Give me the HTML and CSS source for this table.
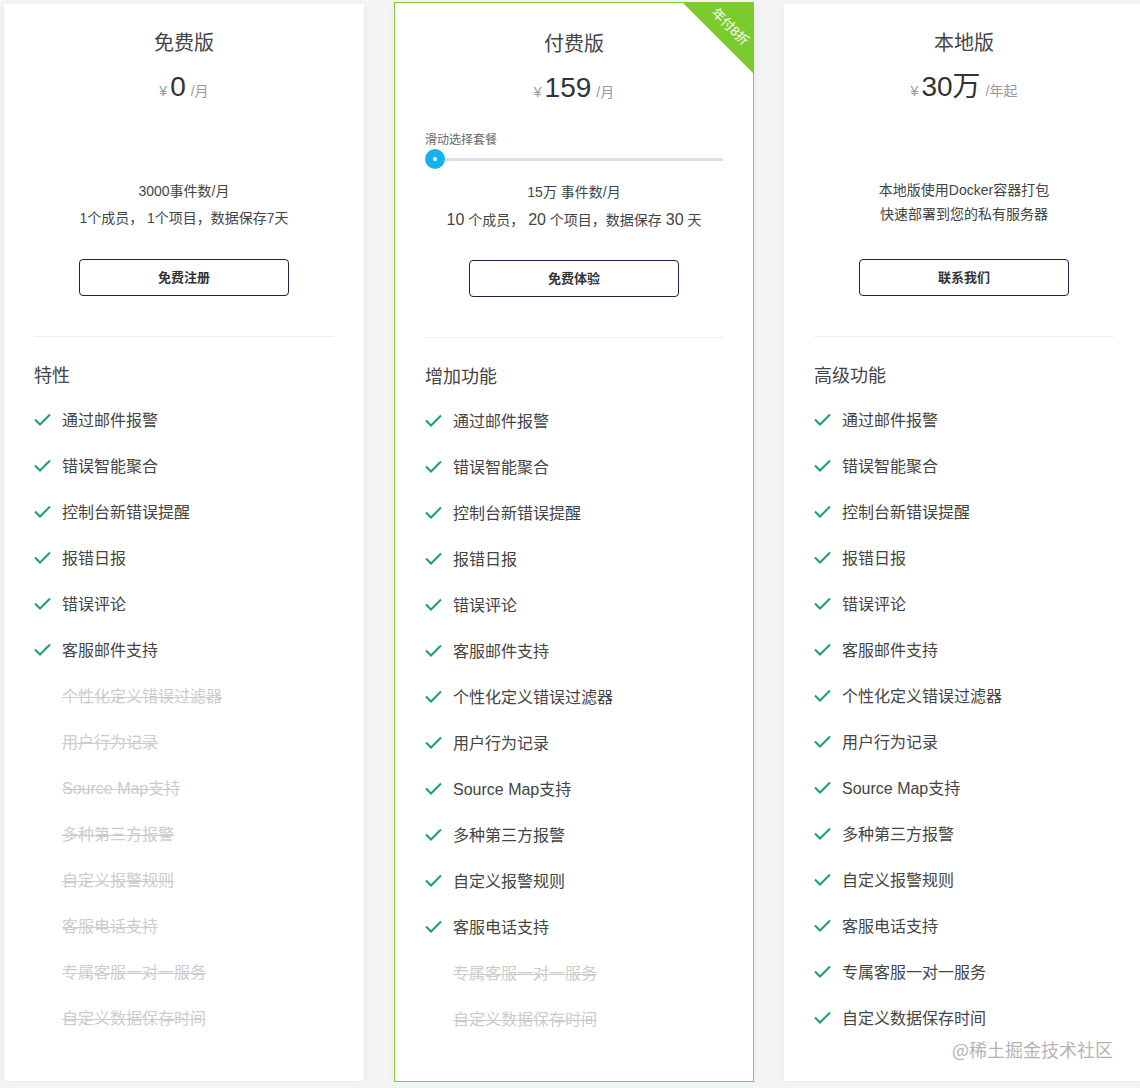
FILE: index.html
```html
<!doctype html>
<html>
<head>
<meta charset="utf-8">
<title>价格方案</title>
<link rel="stylesheet" href="styles.css">
</head>
<body>
<div class="wrap">
    <div class="card">
        <h2 class="title">免费版</h2>
        <p class="price"><span class="yen">¥</span><em>0</em><span class="unit">/月</span></p>
        <div class="spacer"></div>
        <div class="desc">
            <p>3000事件数/月</p>
            <p>1个成员， 1个项目，数据保存7天</p>
        </div>
        <a class="btn" href="#">免费注册</a>
        <div class="line"></div>
        <h3 class="sub">特性</h3>
        <ul class="feats">
            <li><svg viewBox="0 0 17 13"><polyline points="1,6.5 6,11.5 16,1.5"/></svg>通过邮件报警</li>
            <li><svg viewBox="0 0 17 13"><polyline points="1,6.5 6,11.5 16,1.5"/></svg>错误智能聚合</li>
            <li><svg viewBox="0 0 17 13"><polyline points="1,6.5 6,11.5 16,1.5"/></svg>控制台新错误提醒</li>
            <li><svg viewBox="0 0 17 13"><polyline points="1,6.5 6,11.5 16,1.5"/></svg>报错日报</li>
            <li><svg viewBox="0 0 17 13"><polyline points="1,6.5 6,11.5 16,1.5"/></svg>错误评论</li>
            <li><svg viewBox="0 0 17 13"><polyline points="1,6.5 6,11.5 16,1.5"/></svg>客服邮件支持</li>
            <li class="off">个性化定义错误过滤器</li>
            <li class="off">用户行为记录</li>
            <li class="off">Source Map支持</li>
            <li class="off">多种第三方报警</li>
            <li class="off">自定义报警规则</li>
            <li class="off">客服电话支持</li>
            <li class="off">专属客服一对一服务</li>
            <li class="off">自定义数据保存时间</li>
        </ul>
    </div>

    <div class="card hot">
        <div class="ribbon"><span>年付8折</span></div>
        <h2 class="title">付费版</h2>
        <p class="price"><span class="yen">¥</span><em>159</em><span class="unit">/月</span></p>
        <div class="slider">
            <p class="label">滑动选择套餐</p>
            <div class="track"><span class="knob"></span></div>
        </div>
        <div class="desc">
            <p>15万 事件数/月</p>
            <p><b>10</b> 个成员， <b>20</b> 个项目，数据保存 <b>30</b> 天</p>
        </div>
        <a class="btn" href="#">免费体验</a>
        <div class="line"></div>
        <h3 class="sub">增加功能</h3>
        <ul class="feats">
            <li><svg viewBox="0 0 17 13"><polyline points="1,6.5 6,11.5 16,1.5"/></svg>通过邮件报警</li>
            <li><svg viewBox="0 0 17 13"><polyline points="1,6.5 6,11.5 16,1.5"/></svg>错误智能聚合</li>
            <li><svg viewBox="0 0 17 13"><polyline points="1,6.5 6,11.5 16,1.5"/></svg>控制台新错误提醒</li>
            <li><svg viewBox="0 0 17 13"><polyline points="1,6.5 6,11.5 16,1.5"/></svg>报错日报</li>
            <li><svg viewBox="0 0 17 13"><polyline points="1,6.5 6,11.5 16,1.5"/></svg>错误评论</li>
            <li><svg viewBox="0 0 17 13"><polyline points="1,6.5 6,11.5 16,1.5"/></svg>客服邮件支持</li>
            <li><svg viewBox="0 0 17 13"><polyline points="1,6.5 6,11.5 16,1.5"/></svg>个性化定义错误过滤器</li>
            <li><svg viewBox="0 0 17 13"><polyline points="1,6.5 6,11.5 16,1.5"/></svg>用户行为记录</li>
            <li><svg viewBox="0 0 17 13"><polyline points="1,6.5 6,11.5 16,1.5"/></svg>Source Map支持</li>
            <li><svg viewBox="0 0 17 13"><polyline points="1,6.5 6,11.5 16,1.5"/></svg>多种第三方报警</li>
            <li><svg viewBox="0 0 17 13"><polyline points="1,6.5 6,11.5 16,1.5"/></svg>自定义报警规则</li>
            <li><svg viewBox="0 0 17 13"><polyline points="1,6.5 6,11.5 16,1.5"/></svg>客服电话支持</li>
            <li class="off">专属客服一对一服务</li>
            <li class="off">自定义数据保存时间</li>
        </ul>
    </div>

    <div class="card">
        <h2 class="title">本地版</h2>
        <p class="price"><span class="yen">¥</span><em>30万</em><span class="unit">/年起</span></p>
        <div class="spacer"></div>
        <div class="desc small">
            <p>本地版使用Docker容器打包</p>
            <p>快速部署到您的私有服务器</p>
        </div>
        <a class="btn" href="#">联系我们</a>
        <div class="line"></div>
        <h3 class="sub">高级功能</h3>
        <ul class="feats">
            <li><svg viewBox="0 0 17 13"><polyline points="1,6.5 6,11.5 16,1.5"/></svg>通过邮件报警</li>
            <li><svg viewBox="0 0 17 13"><polyline points="1,6.5 6,11.5 16,1.5"/></svg>错误智能聚合</li>
            <li><svg viewBox="0 0 17 13"><polyline points="1,6.5 6,11.5 16,1.5"/></svg>控制台新错误提醒</li>
            <li><svg viewBox="0 0 17 13"><polyline points="1,6.5 6,11.5 16,1.5"/></svg>报错日报</li>
            <li><svg viewBox="0 0 17 13"><polyline points="1,6.5 6,11.5 16,1.5"/></svg>错误评论</li>
            <li><svg viewBox="0 0 17 13"><polyline points="1,6.5 6,11.5 16,1.5"/></svg>客服邮件支持</li>
            <li><svg viewBox="0 0 17 13"><polyline points="1,6.5 6,11.5 16,1.5"/></svg>个性化定义错误过滤器</li>
            <li><svg viewBox="0 0 17 13"><polyline points="1,6.5 6,11.5 16,1.5"/></svg>用户行为记录</li>
            <li><svg viewBox="0 0 17 13"><polyline points="1,6.5 6,11.5 16,1.5"/></svg>Source Map支持</li>
            <li><svg viewBox="0 0 17 13"><polyline points="1,6.5 6,11.5 16,1.5"/></svg>多种第三方报警</li>
            <li><svg viewBox="0 0 17 13"><polyline points="1,6.5 6,11.5 16,1.5"/></svg>自定义报警规则</li>
            <li><svg viewBox="0 0 17 13"><polyline points="1,6.5 6,11.5 16,1.5"/></svg>客服电话支持</li>
            <li><svg viewBox="0 0 17 13"><polyline points="1,6.5 6,11.5 16,1.5"/></svg>专属客服一对一服务</li>
            <li><svg viewBox="0 0 17 13"><polyline points="1,6.5 6,11.5 16,1.5"/></svg>自定义数据保存时间</li>
        </ul>
    </div>
</div>
<div class="mark">@稀土掘金技术社区</div>
</body>
</html>
```

FILE: styles.css
```css
body,div,ul,li,p,h2,h3{margin:0;padding:0;}
ul{list-style-type:none;}
body{background:#f4f4f4;font-family:"Liberation Sans","Noto Sans CJK SC",sans-serif;color:#333;overflow:hidden;}
.wrap{display:flex;align-items:flex-start;gap:30px;padding:4px 0 0 4px;overflow:hidden;}
.card{position:relative;flex:none;width:300px;padding:25px 30px 41px;background:#fff;box-shadow:0 1px 8px rgba(0,0,0,.05);overflow:hidden;}
.card.hot{width:298px;margin-top:-2px;padding:27px 30px 40px;border:1px solid #86c83c;}
.title{font-size:20px;line-height:28px;font-weight:normal;text-align:center;color:#444;}
.price{margin-top:10px;height:40px;line-height:40px;text-align:center;color:#999;font-size:14px;}
.price em{font-style:normal;font-size:28px;color:#333;margin:0 5px 0 3px;}
.spacer{height:71px;}
.slider{height:70px;padding-top:23px;box-sizing:border-box;margin-bottom:1px;}
.slider .label{font-size:12px;line-height:18px;color:#666;}
.track{position:relative;height:20px;}
.track:before{content:"";position:absolute;left:10px;right:0;top:9px;height:3px;background:#dcdcf0;}
.knob{position:absolute;left:0;top:0;width:20px;height:20px;border-radius:50%;background:#15b2ef;}
.knob:after{content:"";position:absolute;left:8px;top:8px;width:4px;height:4px;border-radius:50%;background:#fff;}
.desc{height:54px;text-align:center;font-size:14px;line-height:27px;color:#444;}
.desc b{font-weight:normal;font-size:16px;}
.desc.small{line-height:24px;font-size:14px;}
.btn{display:block;width:208px;height:35px;line-height:35px;margin:27px auto 0;border:1px solid #1c2242;border-radius:4px;text-align:center;font-size:13px;font-weight:bold;color:#333;text-decoration:none;}
.line{margin-top:40px;height:1px;background:#eee;}
.sub{margin-top:26px;font-size:18px;line-height:26px;font-weight:normal;color:#444;}
.feats{margin-top:7px;}
.feats li{display:flex;align-items:center;gap:11px;height:46px;font-size:16px;color:#444;}
.feats li svg{width:17px;height:13px;fill:none;stroke:#1a9e74;stroke-width:2;}
.feats li.off{padding-left:28px;color:#ccc;text-decoration:line-through;}
.ribbon{position:absolute;top:0;right:0;width:70px;height:70px;background:#7ccb2e;clip-path:polygon(0 0,100% 0,100% 100%);}
.ribbon span{position:absolute;left:12px;top:14px;width:70px;line-height:20px;text-align:center;font-size:13px;color:#fff;transform:rotate(45deg);}
.mark{position:absolute;left:952px;top:1036px;font-size:18px;line-height:26px;color:#b4b4b4;font-family:"Noto Sans CJK SC",sans-serif;}
```
